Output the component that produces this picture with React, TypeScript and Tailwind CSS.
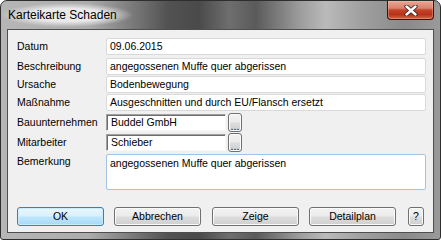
import type { ReactNode } from 'react';

const field =
  'h-[17px] bg-white border border-[#d9d9d9] rounded-[2px] pl-[3px] flex items-center whitespace-nowrap overflow-hidden';
const sunken =
  'h-[17px] bg-white border border-t-[#a0a0a0] border-l-[#a0a0a0] border-r-[#f8f8f8] border-b-[#f8f8f8] shadow-[inset_1px_1px_0_#6d6d6d] pl-[4px] flex items-center whitespace-nowrap overflow-hidden';
const button =
  'h-[19px] rounded-[3px] border border-[#707070] bg-[linear-gradient(180deg,#f2f2f2_0%,#ebebeb_48%,#dddddd_52%,#cfcfcf_100%)] shadow-[inset_0_0_0_1px_#fbfbfb] flex items-center justify-center';

function Row({ label, className, children }: { label: string; className: string; children: ReactNode }) {
  return (
    <div className={`flex items-center ${className}`}>
      <span className="w-[89px] leading-[17px]">{label}</span>
      {children}
    </div>
  );
}

function CloseGlyph() {
  return (
    <svg width="14" height="11" viewBox="0 0 14 11">
      <path d="M2.5 1.5 L11.5 9.5 M11.5 1.5 L2.5 9.5" stroke="#3a2420" strokeWidth="4.2" strokeLinecap="round" />
      <path d="M2.5 1.5 L11.5 9.5 M11.5 1.5 L2.5 9.5" stroke="#ffffff" strokeWidth="2.4" strokeLinecap="round" />
    </svg>
  );
}

export default function App() {
  return (
    <div className="w-[441px] h-[240px] font-['Liberation_Sans',Arial,sans-serif] text-[10.5px] text-black">
      <div className="w-full h-full flex flex-col border border-[#2e2e2e] rounded-t-[7px] rounded-b-[3px] bg-[linear-gradient(90deg,#b6b6b6_0%,#acacac_20%,#7a7a7a_30%,#525252_38%,#4a4a4a_45%,#6e6e6e_52%,#5a5a5a_58%,#9c9c9c_68%,#bababa_74%,#a0a0a0_82%,#8a8a8a_92%,#9a9a9a_100%)]">
        {/* title bar */}
        <div className="h-[28px] flex items-start justify-between">
          <span className="mt-[2px] h-[24px] pl-[7px] pr-[16px] flex items-center text-[12px] bg-[radial-gradient(ellipse_closest-side,rgba(236,236,236,0.95)_55%,rgba(236,236,236,0)_100%)]">
            Karteikarte Schaden
          </span>
          <div className="mr-[6px] w-[47px] h-[19px] rounded-b-[4px] border border-t-0 border-[#3b130c] bg-[linear-gradient(180deg,#e8a896_0%,#d9826c_40%,#c4432a_50%,#b8321a_75%,#d56846_100%)] shadow-[inset_0_0_0_1px_rgba(255,200,180,0.35)] flex items-center justify-center">
            <CloseGlyph />
          </div>
        </div>

        {/* client area */}
        <div className="mx-[6px] h-[204px] border border-[#4f4f4f] bg-[#f0f0f0] pl-[9px] pr-[7px] flex flex-col">
          <Row label="Datum" className="mt-[8px]">
            <div className={`${field} w-[320px]`}>09.06.2015</div>
          </Row>
          <Row label="Beschreibung" className="mt-[3px]">
            <div className={`${field} w-[320px]`}>angegossenen Muffe quer abgerissen</div>
          </Row>
          <Row label="Ursache" className="mt-[1px]">
            <div className={`${field} w-[320px]`}>Bodenbewegung</div>
          </Row>
          <Row label="Maßnahme" className="mt-[1px]">
            <div className={`${field} w-[320px]`}>Ausgeschnitten und durch EU/Flansch ersetzt</div>
          </Row>
          <Row label="Bauunternehmen" className="mt-[2px]">
            <div className={`${sunken} w-[120px]`}>Buddel GmbH</div>
            <div className={`${button} ml-[2px] w-[14px] h-[17px] items-end pb-[1px] leading-[8px]`}>...</div>
          </Row>
          <Row label="Mitarbeiter" className="mt-[1px]">
            <div className={`${sunken} w-[120px]`}>Schieber</div>
            <div className={`${button} ml-[2px] w-[14px] h-[17px] items-end pb-[1px] leading-[8px]`}>...</div>
          </Row>
          <div className="flex items-start mt-[2px]">
            <span className="w-[89px] leading-[15px]">Bemerkung</span>
            <div className="w-[320px] h-[36px] bg-white border border-[#a3c3e4] rounded-[2px] pl-[3px] pt-[1px] leading-[15px] whitespace-nowrap overflow-hidden">
              angegossenen Muffe quer abgerissen
            </div>
          </div>

          <div className="flex mt-[17px]">
            <div className="w-[87px] h-[19px] rounded-[3px] border border-[#3c7fb1] bg-[linear-gradient(180deg,#eaf6fd_0%,#d9f0fc_48%,#bee6fd_52%,#a7d9f5_100%)] shadow-[inset_0_0_0_1px_#c9ecfd] flex items-center justify-center">
              OK
            </div>
            <div className={`${button} ml-[10px] w-[87px]`}>Abbrechen</div>
            <div className={`${button} ml-[11px] w-[87px]`}>Zeige</div>
            <div className={`${button} ml-[10px] w-[87px]`}>Detailplan</div>
            <div className={`${button} ml-[12px] w-[16px]`}>?</div>
          </div>
        </div>
      </div>
    </div>
  );
}
